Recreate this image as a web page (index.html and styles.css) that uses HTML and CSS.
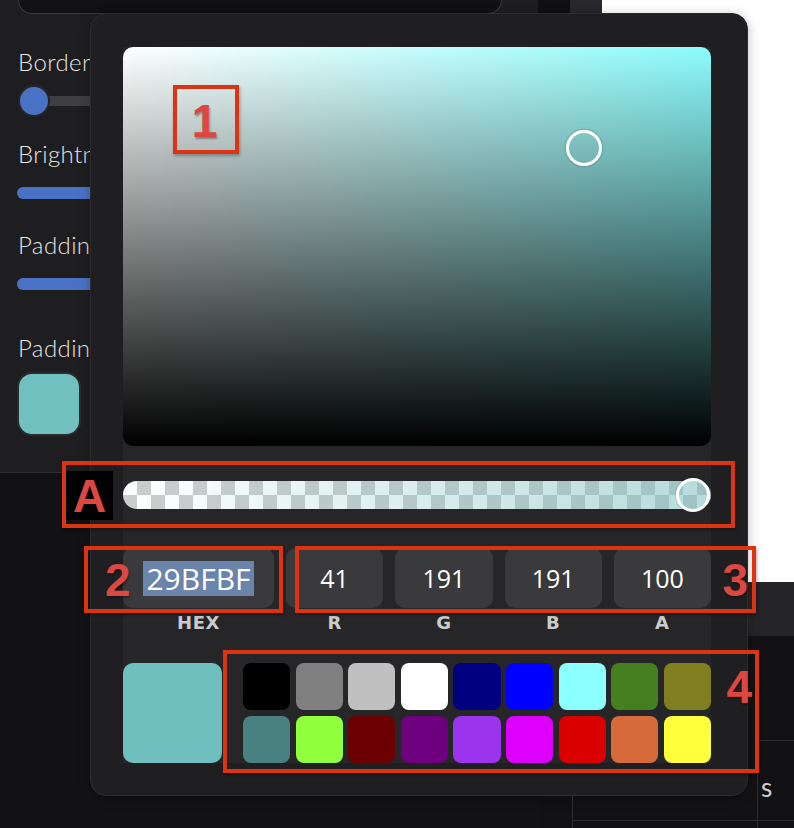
FILE: index.html
```html
<!DOCTYPE html>
<html>
<head>
<meta charset="utf-8">
<link rel="stylesheet" href="styles.css">
</head>
<body>
<div class="app">
  <div class="side-col">
    <div class="side">
      <div class="topbox"></div>
      <div class="lbl lbl-border">Border Radius</div>
      <div class="range">
        <span class="knob"></span><span class="track"></span>
      </div>
      <div class="lbl lbl-bright">Brightness</div>
      <div class="bar bar-bright"></div>
      <div class="lbl lbl-pad">Padding</div>
      <div class="bar bar-pad"></div>
      <div class="lbl lbl-padc">Padding Color</div>
      <div class="side-swatch"></div>
    </div>
  </div>
  <div class="c2"></div>
  <div class="c3">
    <div class="c3-top"></div>
    <div class="c3-foot"><div class="c3-line"></div></div>
  </div>
  <div class="right">
    <div class="r-white"></div>
    <div class="r-band"></div>
    <div class="r-blank"></div>
    <div class="r-row">
      <div class="r-gap"></div>
      <div class="r-cell"><div class="r-text">s</div></div>
    </div>
  </div>

  <div class="popup">
    <div class="col">
      <div class="sv">
        <span class="sv-dot"></span>
      </div>
      <div class="alpha">
        <span class="alpha-handle"></span>
      </div>
      <div class="inputs">
        <div class="inp inp-hex"><span class="sel">29BFBF</span></div>
        <div class="inp">41</div>
        <div class="inp">191</div>
        <div class="inp">191</div>
        <div class="inp">100</div>
      </div>
      <div class="labels">
        <div class="l-hex">HEX</div>
        <div>R</div>
        <div>G</div>
        <div>B</div>
        <div>A</div>
      </div>
      <div class="bottom">
        <div class="preview"></div>
        <div class="swatches">
          <span class="sw" style="background:#000000"></span>
          <span class="sw" style="background:#808080"></span>
          <span class="sw" style="background:#c0c0c0"></span>
          <span class="sw" style="background:#ffffff"></span>
          <span class="sw" style="background:#000080"></span>
          <span class="sw" style="background:#0000ff"></span>
          <span class="sw" style="background:#8cffff"></span>
          <span class="sw" style="background:#467f1f"></span>
          <span class="sw" style="background:#7f7f1f"></span>
          <span class="sw" style="background:#498080"></span>
          <span class="sw" style="background:#90ff3c"></span>
          <span class="sw" style="background:#6c0000"></span>
          <span class="sw" style="background:#6e007f"></span>
          <span class="sw" style="background:#9c34ee"></span>
          <span class="sw" style="background:#dd00fc"></span>
          <span class="sw" style="background:#db0000"></span>
          <span class="sw" style="background:#d66a3a"></span>
          <span class="sw" style="background:#ffff3c"></span>
        </div>
      </div>
    </div>
  </div>

  <div class="anno anno-1"><span class="num">1</span></div>
  <div class="anno anno-a"><span class="num-a">A</span></div>
  <div class="anno anno-2"><span class="num">2</span></div>
  <div class="anno anno-3"><span class="num">3</span></div>
  <div class="anno anno-4"><span class="num">4</span></div>
</div>
</body>
</html>
```

FILE: styles.css
```css
* { box-sizing: border-box; }
html, body { margin: 0; padding: 0; }
body { background: #121214; font-family: "Lato", "Noto Sans", sans-serif; }

.app {
  position: relative;
  width: 794px;
  height: 828px;
  display: flex;
  overflow: hidden;
  background: #121214;
}

/* ---------- background app ---------- */
.side-col { width: 538px; }
.side {
  height: 473px;
  background: #1e1e20;
  border-bottom: 1px solid #2e2e31;
  padding-left: 18px;
  display: flex;
  flex-direction: column;
  align-items: flex-start;
}
.topbox {
  width: 484px;
  height: 14px;
  background: #111113;
  border: 1px solid #3a3a3e;
  border-top: none;
  border-radius: 0 0 14px 14px;
}
.lbl {
  font-family: "Lato", sans-serif;
  font-weight: 300;
  font-size: 24px;
  line-height: 24px;
  letter-spacing: 0.4px;
  color: #e4e4e4;
  white-space: nowrap;
}
.lbl-border { margin-top: 36px; }
.range { margin-top: 11px; display: flex; align-items: center; height: 32px; }
.knob {
  width: 32px; height: 32px; border-radius: 50%;
  background: #4a72c4; border: 2px solid #26262a;
  position: relative; z-index: 1;
}
.track { width: 200px; height: 10px; background: #3e3e43; margin-left: -2px; }
.lbl-bright { margin-top: 25px; }
.bar { width: 220px; height: 12px; border-radius: 6px; background: #4a72c4; margin-left: -1px; }
.bar-bright { margin-top: 21px; }
.lbl-pad { margin-top: 34px; }
.bar-pad { margin-top: 21px; }
.lbl-padc { margin-top: 46px; }
.side-swatch {
  margin-top: 12px;
  width: 64px; height: 64px;
  border-radius: 15px;
  background: #70c0c0;
  border: 2px solid #2c2c30;
  margin-left: -1px;
}

.c2 { width: 32px; background: #111113; }
.c3 { width: 32px; display: flex; flex-direction: column; }
.c3-top { height: 796px; background: #28282c; }
.c3-foot { flex: 1; margin-left: 2px; border-left: 1px solid #2e2e32; }
.c3-line { height: 25px; border-bottom: 1px solid #2e2e32; }

.right { flex: 1; display: flex; flex-direction: column; }
.r-white { height: 582px; background: #ffffff; }
.r-band { height: 54px; background: #252528; }
.r-blank { height: 104px; }
.r-row { flex: 1; display: flex; }
.r-gap { width: 155px; height: 81px; border-bottom: 1px solid #2e2e32; }
.r-cell { flex: 1; border-top: 1px solid #2e2e32; border-left: 1px solid #2e2e32; }
.r-text {
  height: 80px;
  border-bottom: 1px solid #2e2e32;
  padding: 33px 0 0 3px;
  font-family: "Lato", sans-serif;
  font-size: 26px;
  line-height: 26px;
  color: #cfcfcf;
}

/* ---------- popup ---------- */
.popup {
  position: absolute;
  left: 90px;
  top: 13px;
  width: 658px;
  height: 783px;
  background: #1f1f22;
  border: 1px solid #2c2c30;
  border-radius: 16px;
  padding: 33px 36px 32px 32px;
  box-shadow: 0 2px 12px rgba(0, 0, 0, 0.25);
}
.col {
  width: 588px;
  height: 716px;
  background: #262628;
  display: flex;
  flex-direction: column;
}
.sv {
  position: relative;
  height: 399px;
  border-radius: 10px;
  background:
    linear-gradient(to top, #000 0%, rgba(0,0,0,0) 100%),
    linear-gradient(to right, #ffffff 0%, #8cfbfb 100%);
}
.sv-dot {
  position: absolute;
  left: 443px;
  top: 83px;
  width: 36px;
  height: 36px;
  border-radius: 50%;
  border: 3px solid #ffffff;
  box-shadow: 0 0 3px rgba(0,0,0,0.3);
}
.alpha {
  position: relative;
  margin-top: 35px;
  height: 28px;
  border-radius: 14px;
  background:
    linear-gradient(to right, rgba(121,189,189,0) 0%, rgba(121,189,189,0.55) 100%),
    repeating-conic-gradient(#cccccc 0 25%, #ffffff 0 50%) 0 0 / 28px 28px;
}
.alpha-handle {
  position: absolute;
  right: 1px;
  top: -3px;
  width: 34px;
  height: 34px;
  border-radius: 50%;
  border: 3.5px solid #ffffff;
  box-shadow: 0 0 2px rgba(0,0,0,0.25);
}
.inputs {
  margin-top: 39px;
  display: flex;
  gap: 12px;
  height: 60px;
}
.inp {
  flex: 1;
  background: #3a3a3c;
  border-radius: 10px;
  display: flex;
  align-items: center;
  justify-content: center;
  font-family: "Open Sans", sans-serif;
  font-size: 25px;
  color: #ffffff;
}
.inp-hex { flex: 0 0 151px; }
.sel {
  background: #6b84ab;
  font-size: 30px;
  line-height: 35px;
  padding: 0 3px;
}
.labels {
  margin-top: 4px;
  display: flex;
  gap: 12px;
  height: 22px;
  font-family: "DejaVu Sans", sans-serif;
  font-weight: bold;
  font-size: 18px;
  line-height: 22px;
  letter-spacing: 0.6px;
  color: #cbcbcb;
}
.labels div { flex: 1; text-align: center; }
.labels .l-hex { flex: 0 0 151px; }
.bottom {
  margin-top: 29px;
  height: 100px;
  display: flex;
  gap: 21px;
}
.preview {
  width: 99px;
  height: 100px;
  border-radius: 10px;
  background: #6fbfbf;
}
.swatches {
  width: 468px;
  display: grid;
  grid-template-columns: repeat(9, 1fr);
  grid-template-rows: 47px 47px;
  column-gap: 5.6px;
  row-gap: 6px;
}
.sw { border-radius: 8px; }

/* ---------- annotations ---------- */
.anno {
  position: absolute;
  border: 4px solid #dc3412;
  box-shadow: 1px 2px 3px rgba(0,0,0,0.3);
  display: flex;
}
.num, .num-a {
  font-family: "Liberation Sans", Arial, sans-serif;
  font-weight: bold;
  font-size: 46px;
  line-height: 46px;
  color: #dc4741;
  text-shadow: 1px 2px 2px rgba(0,0,0,0.35);
}
.anno-1 { left: 173px; top: 85px; width: 66px; height: 69px; align-items: center; justify-content: center; padding-top: 2px; padding-right: 3px; }
.anno-a { left: 62px; top: 461px; width: 673px; height: 67px; align-items: flex-start; padding-top: 6px; }
.num-a {
  width: 47px; height: 49px;
  background: #000000;
  font-size: 46px;
  line-height: 50px;
  text-align: center;
}
.anno-2 { left: 84px; top: 546px; width: 199px; height: 67px; align-items: center; padding-left: 17px; }
.anno-3 { left: 295px; top: 546px; width: 461px; height: 67px; align-items: center; justify-content: flex-end; padding-right: 4px; }
.anno-4 { left: 223px; top: 650px; width: 536px; height: 123px; justify-content: flex-end; padding: 10px 3px 0 0; }
```
